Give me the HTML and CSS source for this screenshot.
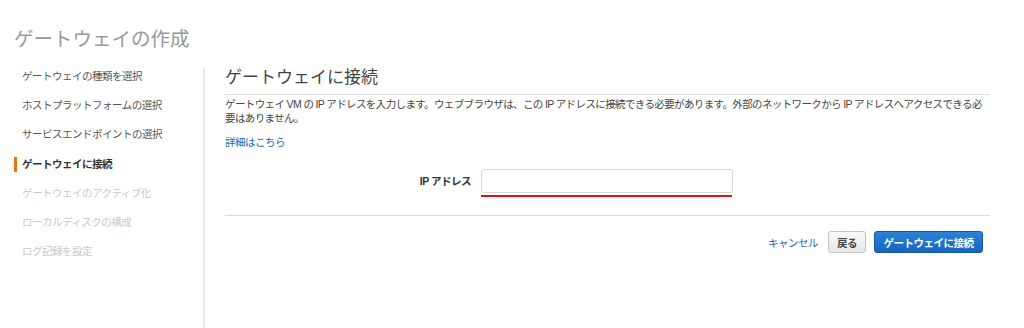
FILE: index.html
```html
<!DOCTYPE html>
<html>
<head>
    <meta charset="UTF-8">
    <title>ゲートウェイの作成</title>
    <link rel="stylesheet" href="styles.css">
</head>
<body>
    <h1 class="page-title">ゲートウェイの作成</h1>

    <div class="wizard">
        <ul class="steps">
            <li class="step">ゲートウェイの種類を選択</li>
            <li class="step">ホストプラットフォームの選択</li>
            <li class="step">サービスエンドポイントの選択</li>
            <li class="step active">ゲートウェイに接続</li>
            <li class="step disabled">ゲートウェイのアクティブ化</li>
            <li class="step disabled">ローカルディスクの構成</li>
            <li class="step disabled">ログ記録を設定</li>
        </ul>

        <div class="panel">
            <h2 class="panel-title">ゲートウェイに接続</h2>
            <p class="desc">ゲートウェイ VM の IP アドレスを入力します。ウェブブラウザは、この IP アドレスに接続できる必要があります。外部のネットワークから IP アドレスへアクセスできる必要はありません。</p>
            <a class="more" href="#">詳細はこちら</a>

            <div class="field">
                <label class="field-label" for="ip">IP アドレス</label>
                <div class="field-input">
                    <input id="ip" type="text">
                    <div class="mark"></div>
                </div>
            </div>

            <div class="actions">
                <a class="cancel" href="#">キャンセル</a>
                <button class="btn">戻る</button>
                <button class="btn primary">ゲートウェイに接続</button>
            </div>
        </div>
    </div>
</body>
</html>
```

FILE: styles.css
```css
:root {
    --txt: #444;
    --muted: #999;
    --off: #c8c8c8;
    --line: #dcdcdc;
    --link: #2467b3;
    --orng: #ec7211;
}

body {
    margin: 0;
    font-family: "Liberation Sans", "Noto Sans CJK JP", sans-serif;
    font-size: 10.5px;
    letter-spacing: -0.5px;
    color: var(--txt);
    background: #fff;
}

.page-title {
    margin: 0 0 10px;
    padding: 26px 0 0 14px;
    font-size: 19.5px;
    line-height: 26px;
    letter-spacing: 0;
    font-weight: normal;
    color: var(--muted);
}

.wizard {
    display: flex;
    align-items: flex-start;
}

.steps {
    list-style: none;
    margin: 0;
    padding: 0;
    width: 203px;
}

.step {
    position: relative;
    height: 29.2px;
    line-height: 29px;
    padding-left: 22px;
    color: #555;
}

.step.active {
    font-weight: bold;
    color: #333;
}

.step.active::before {
    content: "";
    position: absolute;
    left: 14px;
    top: 7px;
    width: 3px;
    height: 15px;
    background: var(--orng);
}

.step.disabled {
    color: var(--off);
}

.panel {
    margin-top: 6px;
    height: 260px;
    border-left: 2px solid #e8e8e8;
    padding-left: 20px;
    width: 765px;
}

.panel-title {
    margin: 0;
    padding-bottom: 6px;
    font-size: 17px;
    line-height: 20px;
    letter-spacing: 0;
    font-weight: normal;
    color: #444;
    border-bottom: 1px solid var(--line);
}

.desc {
    margin: 2px 0 0;
    line-height: 14px;
    letter-spacing: -0.62px;
}

.more {
    display: block;
    margin-top: 10px;
    line-height: 14px;
    color: var(--link);
    text-decoration: none;
}

.field {
    display: flex;
    align-items: flex-start;
    gap: 10px;
    margin-top: 20px;
    padding-bottom: 18px;
    border-bottom: 1px solid var(--line);
}

.field-label {
    width: 246px;
    text-align: right;
    font-weight: bold;
    color: #333;
    line-height: 24px;
}

.field-input input {
    display: block;
    box-sizing: border-box;
    width: 252px;
    height: 24px;
    border: 1px solid #d6d6d6;
    border-radius: 3px;
    margin: 0;
}

.mark {
    margin-top: 2px;
    width: 251px;
    height: 2px;
    background: #e8100c;
}

.actions {
    display: flex;
    justify-content: flex-end;
    align-items: center;
    gap: 8px;
    margin-top: 15px;
    padding-right: 7px;
}

.cancel {
    margin-right: 2px;
    color: var(--link);
    text-decoration: none;
}

.btn {
    height: 22px;
    padding: 0 8px;
    font-family: inherit;
    font-size: 10.5px;
    letter-spacing: -0.5px;
    font-weight: bold;
    white-space: nowrap;
    color: #444;
    background: linear-gradient(#fafafa, #e6e6e6);
    border: 1px solid #c4c4c4;
    border-radius: 3px;
}

.btn.primary {
    width: 109px;
    color: #fff;
    background: linear-gradient(#2a82d8, #1566c0);
    border-color: #15589e;
}
```
